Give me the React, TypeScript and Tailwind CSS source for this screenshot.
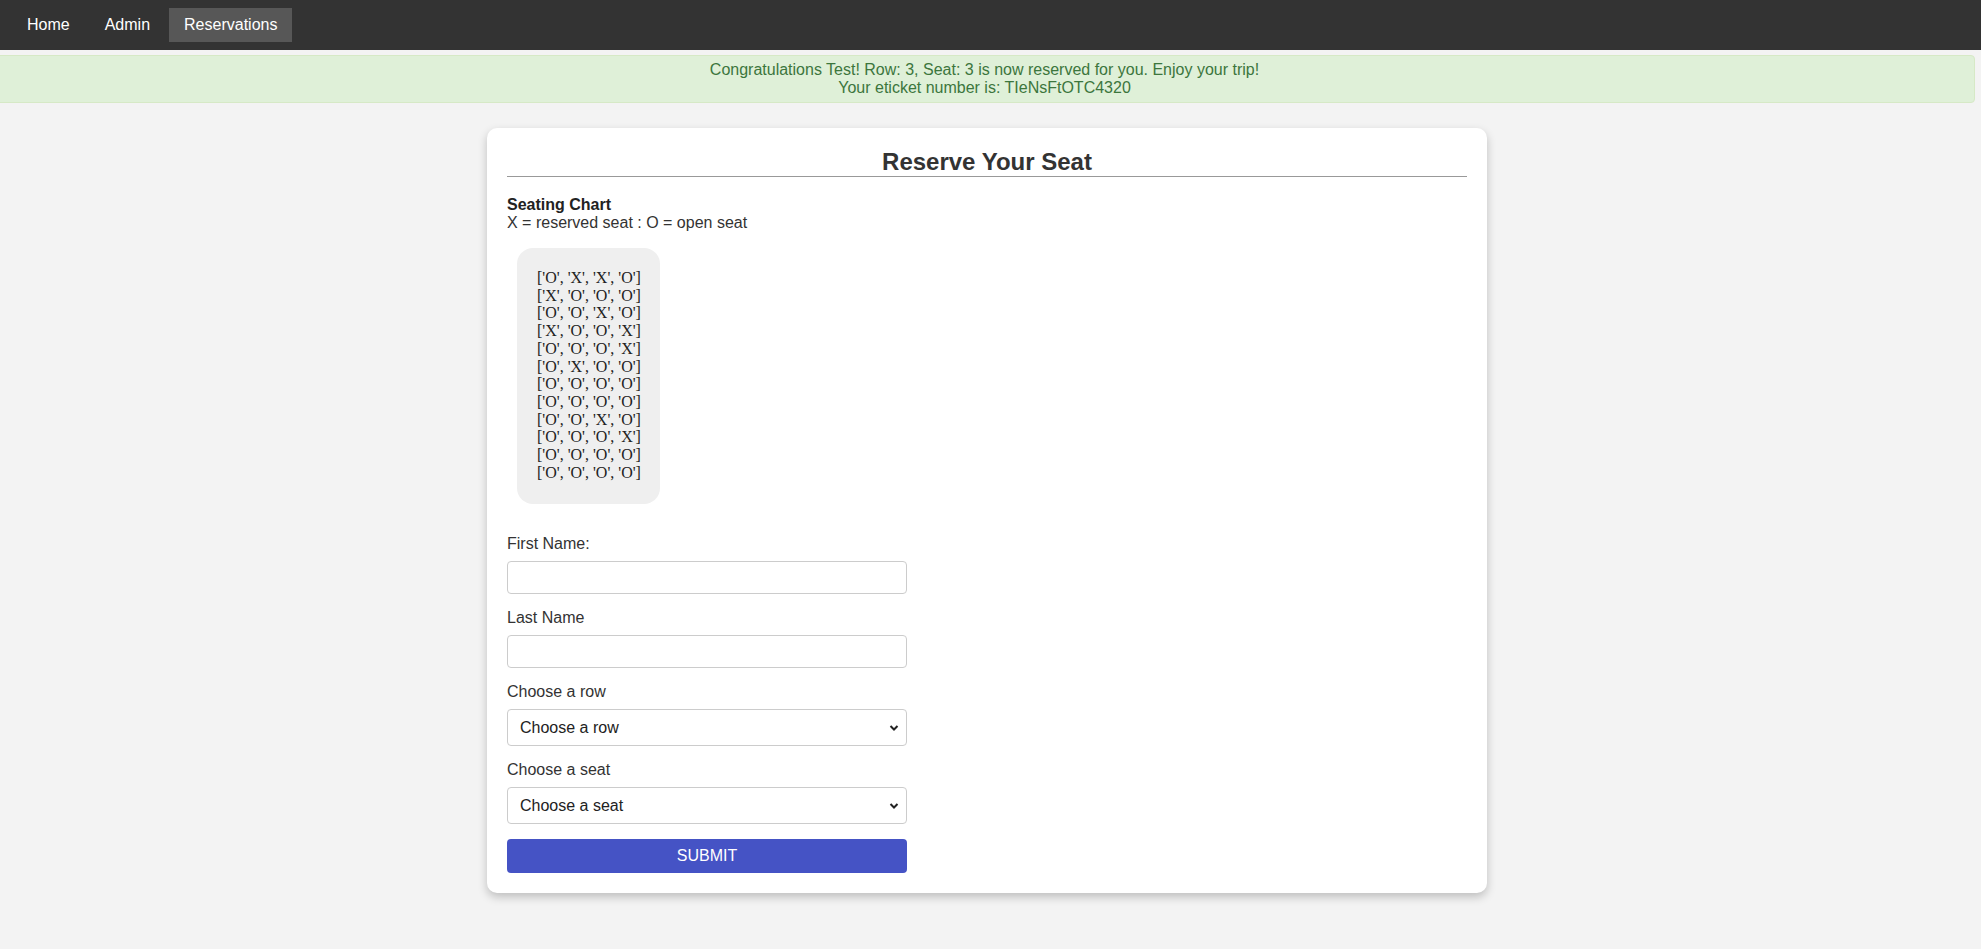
import React from "react";

const seats = [
  ["O", "X", "X", "O"],
  ["X", "O", "O", "O"],
  ["O", "O", "X", "O"],
  ["X", "O", "O", "X"],
  ["O", "O", "O", "X"],
  ["O", "X", "O", "O"],
  ["O", "O", "O", "O"],
  ["O", "O", "O", "O"],
  ["O", "O", "X", "O"],
  ["O", "O", "O", "X"],
  ["O", "O", "O", "O"],
  ["O", "O", "O", "O"],
];

function Chevron() {
  return (
    <svg
      width="10"
      height="7"
      viewBox="0 0 10 7"
      className="pointer-events-none absolute right-[8px] top-1/2 -translate-y-1/2"
    >
      <path d="M1.5 1.5 L5 5 L8.5 1.5" fill="none" stroke="#222" strokeWidth="2" />
    </svg>
  );
}

function SelectBox({ label }: { label: string }) {
  return (
    <div className="relative w-[400px] mb-[15px]">
      <select className="appearance-none w-full h-[37px] pl-3 pr-8 bg-white border border-[#ccc] rounded text-base text-[#222] outline-none">
        <option>{label}</option>
      </select>
      <Chevron />
    </div>
  );
}

export default function App() {
  return (
    <div className="min-h-[949px] bg-[#f3f3f3] text-[#333] font-['Liberation_Sans',Arial,sans-serif] text-base pb-[57px]">
      {/* navbar */}
      <div className="h-[50px] bg-[#333] flex items-center pl-[11px] gap-[3px]">
        <a className="px-4 h-[34px] leading-[34px] text-white">Home</a>
        <a className="px-4 h-[34px] leading-[34px] text-white">Admin</a>
        <a className="px-[15px] h-[34px] leading-[34px] text-white bg-[#575757]">Reservations</a>
      </div>

      {/* alert */}
      <div className="mt-[5px] -ml-[6px] mr-[6px] border border-[#d6e9c6] bg-[#dff0d8] text-[#3c763d] rounded py-[5px] text-center leading-[18px]">
        <div>Congratulations Test! Row: 3, Seat: 3 is now reserved for you. Enjoy your trip!</div>
        <div>Your eticket number is: TIeNsFtOTC4320</div>
      </div>

      {/* card */}
      <div className="flex justify-center pr-[7px] mt-[25px]">
        <div className="w-[1000px] bg-white rounded-[10px] shadow-[0_4px_10px_rgba(0,0,0,0.22)] px-5 pt-5 pb-5">
          <h2 className="text-[24px] leading-[28px] font-bold text-center text-[#333] border-b border-[#999]">
            Reserve Your Seat
          </h2>

          <div className="mt-[19px] leading-[18px]">
            <div className="font-bold text-[#222]">Seating Chart</div>
            <div>X = reserved seat : O = open seat</div>
          </div>

          <div className="mt-4 ml-[10px] inline-block bg-[#efefef] rounded-[16px] pl-5 pr-[19px] pt-[21px] pb-[23px] leading-[17.7px] font-['Liberation_Serif','Times_New_Roman',serif] text-[#222]">
            {seats.map((row, i) => (
              <div key={i}>[{row.map((s) => `'${s}'`).join(", ")}]</div>
            ))}
          </div>

          <form className="mt-[31px] flex flex-col" onSubmit={(e) => e.preventDefault()}>
            <label className="leading-[18px] mb-2">First Name:</label>
            <input className="w-[400px] h-[33px] mb-[15px] px-3 border border-[#ccc] rounded bg-white outline-none" />

            <label className="leading-[18px] mb-2">Last Name</label>
            <input className="w-[400px] h-[33px] mb-[15px] px-3 border border-[#ccc] rounded bg-white outline-none" />

            <label className="leading-[18px] mb-2">Choose a row</label>
            <SelectBox label="Choose a row" />

            <label className="leading-[18px] mb-2">Choose a seat</label>
            <SelectBox label="Choose a seat" />

            <button className="w-[400px] h-[34px] bg-[#4553c5] text-white rounded text-base">
              SUBMIT
            </button>
          </form>
        </div>
      </div>
    </div>
  );
}
